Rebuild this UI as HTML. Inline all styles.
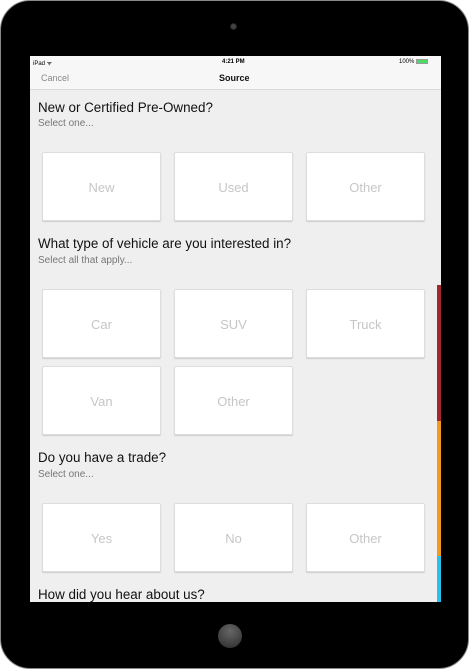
<!DOCTYPE html>
<html><head><style>
*{margin:0;padding:0;box-sizing:border-box}
body{width:469px;height:669px;background:#fff;position:relative;overflow:hidden;font-family:"Liberation Sans",Helvetica,sans-serif}
.dev{position:absolute;left:0;top:0;width:469px;height:669px;background:#000;border:1px solid #888;border-radius:30px}
.cam{position:absolute;left:230px;top:23px;width:7px;height:7px;border-radius:50%;background:#444;border:1px solid #222}
.home{position:absolute;left:218px;top:624px;width:24px;height:24px;border-radius:50%;background:radial-gradient(circle at 50% 30%,#666,#2a2a2a)}
.scr{position:absolute;left:30px;top:56px;width:411px;height:546px;background:#efefef;overflow:hidden}
.sb{position:absolute;left:0;top:0;width:411px;height:12px;background:#f7f7f7;font-size:6px;color:#000}
.nav{position:absolute;left:0;top:12px;width:411px;height:22px;background:#f7f7f7;border-bottom:1px solid #d8d8d8}
.h{position:absolute;left:8px;font-size:13.4px;color:#111}
.s{position:absolute;left:8px;font-size:10px;color:#777}
.b{position:absolute;width:119px;height:69px;background:#fff;border:1px solid #ddd;border-radius:2px;box-shadow:0 1px 1px #ccc;color:#c6c6c6;font-size:13px;text-align:center;line-height:69px}
</style></head><body>
<div class="dev"></div>
<div class="cam"></div>
<div class="home"></div>
<div class="scr">
 <div class="sb"><span style="position:absolute;left:3px;top:3px">iPad ᯤ</span><span style="position:absolute;left:192px;top:3px;font-weight:bold">4:21 PM</span><span style="position:absolute;left:369px;top:3px">100%</span><span style="position:absolute;left:386px;top:3px;width:12px;height:5px;background:#4cd964;border:1px solid #999"></span></div>
 <div class="nav"><span style="position:absolute;left:11px;top:5px;font-size:9px;color:#888">Cancel</span><span style="position:absolute;left:189px;top:5px;font-size:9px;font-weight:bold;color:#111">Source</span></div>
 <div class="h" style="top:44px">New or Certified Pre-Owned?</div>
 <div class="s" style="top:62px">Select one...</div>
 <div class="b" style="left:12px;top:96px">New</div>
 <div class="b" style="left:144px;top:96px">Used</div>
 <div class="b" style="left:276px;top:96px">Other</div>
 <div class="h" style="top:180px">What type of vehicle are you interested in?</div>
 <div class="s" style="top:199px">Select all that apply...</div>
 <div class="b" style="left:12px;top:233px">Car</div>
 <div class="b" style="left:144px;top:233px">SUV</div>
 <div class="b" style="left:276px;top:233px">Truck</div>
 <div class="b" style="left:12px;top:310px">Van</div>
 <div class="b" style="left:144px;top:310px">Other</div>
 <div class="h" style="top:394px">Do you have a trade?</div>
 <div class="s" style="top:413px">Select one...</div>
 <div class="b" style="left:12px;top:447px">Yes</div>
 <div class="b" style="left:144px;top:447px">No</div>
 <div class="b" style="left:276px;top:447px">Other</div>
 <div class="h" style="top:531px">How did you hear about us?</div>
 <div style="position:absolute;left:407px;top:229px;width:4px;height:136px;background:#a0282e"></div>
 <div style="position:absolute;left:407px;top:365px;width:4px;height:135px;background:#f39a1e"></div>
 <div style="position:absolute;left:407px;top:500px;width:4px;height:46px;background:#2bbfeb"></div>
</div>
</body></html>
